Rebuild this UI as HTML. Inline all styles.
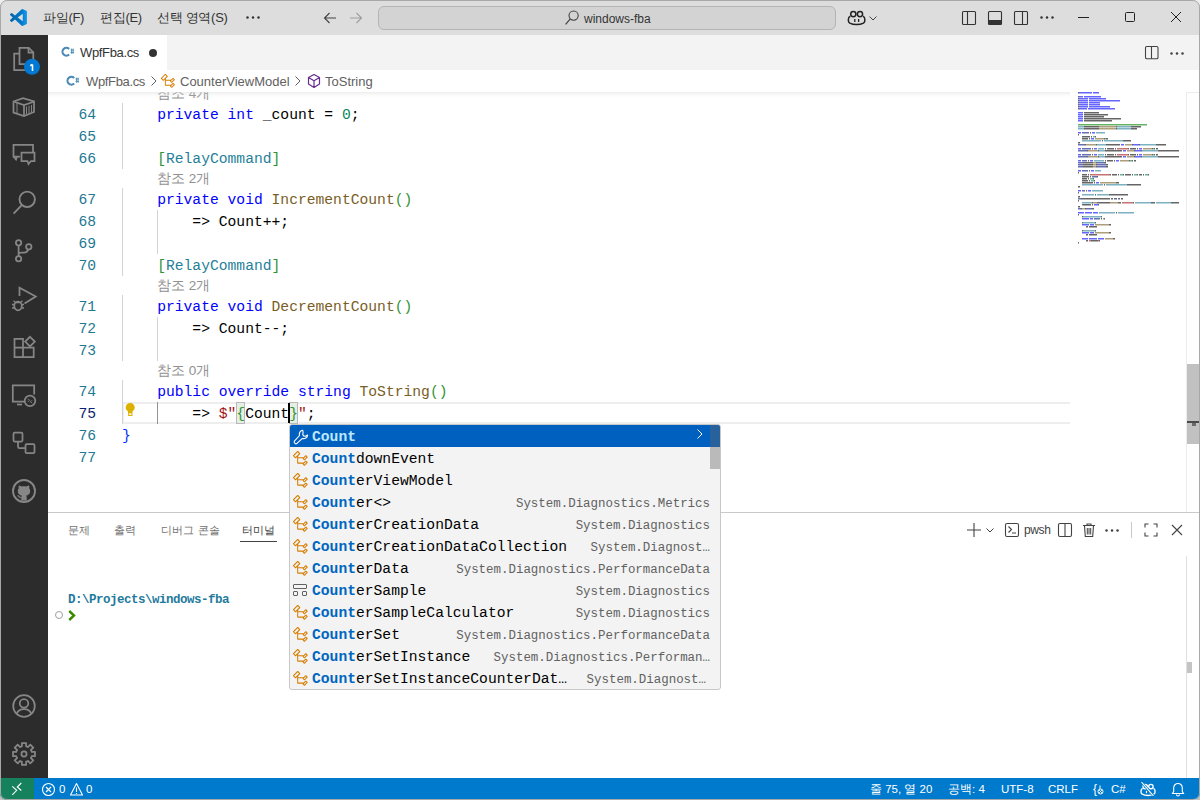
<!DOCTYPE html>
<html><head><meta charset="utf-8">
<style>
*{box-sizing:border-box;margin:0;padding:0}
html,body{width:1200px;height:800px;overflow:hidden;background:linear-gradient(#eeeeee 0,#eeeeee 400px,#c2c2c2 400px,#c2c2c2 800px)}
body{font-family:"Liberation Sans",sans-serif;position:relative}
.a{position:absolute}
svg{overflow:visible}
.win{position:absolute;left:0;top:0;width:1200px;height:800px;border-radius:7px;overflow:hidden;background:#fff}
.frame{position:absolute;left:0;top:0;width:1200px;height:800px;border:1px solid #a8a8a8;border-radius:7px;pointer-events:none}
.title{position:absolute;left:0;top:0;width:1200px;height:35px;background:#dddddd}
.menu{position:absolute;top:0;height:35px;line-height:35px;font-size:13px;color:#333;letter-spacing:-.3px}
.act{position:absolute;left:0;top:35px;width:48px;height:743px;background:#2c2c2c}
.tabs{position:absolute;left:48px;top:35px;width:1152px;height:35px;background:#f3f3f3}
.tab{position:absolute;left:0;top:0;width:119px;height:35px;background:#fff}
.bc{position:absolute;left:48px;top:70px;width:1152px;height:22px;background:#fff;font-size:13px;color:#616161;line-height:22px}
.ed{position:absolute;left:48px;top:92px;width:1152px;height:420px;background:#fff;overflow:hidden}
.mono{font-family:"Liberation Mono",monospace}
.ln{position:absolute;font-family:"Liberation Mono",monospace;left:0;width:50px;text-align:right;font-size:14.66px;color:#237893;height:22px;line-height:24px}
.cl{position:absolute;font-family:"Liberation Mono",monospace;height:22px;line-height:24px;font-size:14.66px;white-space:pre;color:#000}
.lens{position:absolute;font-size:13.5px;color:#919191;height:19px;line-height:19px;white-space:pre}
.k{color:#0000ff}.m{color:#795e26}.c{color:#267f99}.g{color:#319331}.s{color:#a31515}.n{color:#098658}.b1{color:#0431fa}
.panel{position:absolute;left:48px;top:512px;width:1152px;height:266px;background:#fff;border-top:1px solid #c9c9c9}
.status{position:absolute;left:0;top:778px;width:1200px;height:21px;background:#007acc;color:#fff;font-size:12px;line-height:21px}
.ptab{position:absolute;top:521px;font-size:11px;line-height:18px;color:#717171;letter-spacing:.2px}
.stx{position:absolute;top:778px;height:22px;line-height:22px;font-size:11.5px;color:#fff;white-space:pre}
.sug{position:absolute;z-index:10;left:289px;top:424px;width:432px;height:266px;background:#f3f3f3;border:1px solid #c8c8c8;border-radius:3px;overflow:hidden}
.row{position:absolute;font-family:"Liberation Mono",monospace;left:0;width:430px;height:22px;line-height:24px;font-size:14.66px;white-space:pre;color:#000}
.hl{color:#0066bf;font-weight:bold}
.det{position:absolute;right:10px;top:1px;font-size:12.45px;color:#616161}
</style></head><body>
<div class="win">
  <div class="title">
    <svg class="a" style="left:10px;top:9px" width="17" height="17" viewBox="0 0 100 100"><defs><linearGradient id="lg" x1="0" y1="0" x2="1" y2="0"><stop offset="0" stop-color="#0065a9"/><stop offset="0.7" stop-color="#007acc"/><stop offset="1" stop-color="#1f9cf0"/></linearGradient></defs><path fill="url(#lg)" d="M96.46 10.8L75.86.87a6.23 6.23 0 0 0-7.1 1.2L29.55 37.850 12.470 24.9a4.16 4.16 0 0 0-5.32.23l-5.5 5a4.17 4.17 0 0 0 0 6.16L16.45 50 1.65 63.7a4.17 4.17 0 0 0 0 6.160l5.5 5a4.16 4.16 0 0 0 5.32.23l17.08-12.96 39.21 35.78a6.22 6.22 0 0 0 7.1 1.2l20.6-9.92A6.25 6.25 0 0 0 100 83.56V16.44a6.25 6.25 0 0 0-3.54-5.64zM75.02 72.7L45.28 50l29.740-22.7v45.4z"/></svg>
    <div class="menu" style="left:43px">파일(F)</div>
    <div class="menu" style="left:100px">편집(E)</div>
    <div class="menu" style="left:157px">선택 영역(S)</div>
    <svg class="a" style="left:246px;top:16px" width="14" height="3"><circle cx="1.5" cy="1.5" r="1.25" fill="#333"/><circle cx="7" cy="1.5" r="1.25" fill="#333"/><circle cx="12.5" cy="1.5" r="1.25" fill="#333"/></svg>
    <svg class="a" style="left:322px;top:10px" width="16" height="16" viewBox="0 0 16 16"><path d="M14 8H2.5M7.5 3L2.5 8l5 5" stroke="#424242" stroke-width="1.1" fill="none"/></svg>
    <svg class="a" style="left:348px;top:10px" width="16" height="16" viewBox="0 0 16 16"><path d="M2 8h11.5M8.5 3l5 5-5 5" stroke="#9e9e9e" stroke-width="1.1" fill="none"/></svg>
    <div class="a" style="left:378px;top:6px;width:458px;height:24px;border:1px solid #b4b4b4;border-radius:6px;background:#d3d3d3"></div>
    <svg class="a" style="left:564px;top:10px" width="16" height="16" viewBox="0 0 16 16"><circle cx="9.6" cy="5.6" r="4.6" stroke="#424242" stroke-width="1.1" fill="none"/><path d="M6.3 8.9L1.6 14.4" stroke="#424242" stroke-width="1.2"/></svg>
    <div class="a" style="left:584px;top:7px;height:24px;line-height:24px;font-size:12px;color:#333">windows-fba</div>
    <svg class="a" style="left:846px;top:8px" width="20" height="18" viewBox="0 0 20 18"><circle cx="7.3" cy="6.1" r="2.6" fill="none" stroke="#222" stroke-width="1.5"/><circle cx="14" cy="6.1" r="2.6" fill="none" stroke="#222" stroke-width="1.5"/><path d="M4.300 8.200C3 8.700 2.400 9.800 2.400 11.200V12.800C2.400 13.800 3 14.600 3.800 15.100 5.600 16.100 8 16.600 10.600 16.600S15.600 16.100 17.400 15.100C18.200 14.600 18.800 13.800 18.800 12.800V11.200C18.800 9.800 18.200 8.700 17 8.200" fill="none" stroke="#222" stroke-width="1.5"/><path d="M8.800 11v3M12.600 11v3" stroke="#222" stroke-width="1.3"/></svg>
    <svg class="a" style="left:868px;top:14px" width="10" height="8" viewBox="0 0 10 8"><path d="M1.5 2.5l3.500 3.500 3.500-3.500" stroke="#424242" stroke-width="1" fill="none"/></svg>
    <svg class="a" style="left:961px;top:10px" width="16" height="16" viewBox="0 0 16 16"><rect x="1.5" y="1.5" width="13" height="13" rx="1" fill="none" stroke="#333" stroke-width="1.1"/><path d="M6.5 1.5v13" stroke="#333" stroke-width="1.1"/></svg>
    <svg class="a" style="left:987px;top:10px" width="16" height="16" viewBox="0 0 16 16"><rect x="1.5" y="1.5" width="13" height="13" rx="1" fill="none" stroke="#333" stroke-width="1.1"/><rect x="1.5" y="10" width="13" height="4.5" fill="#333"/></svg>
    <svg class="a" style="left:1013px;top:10px" width="16" height="16" viewBox="0 0 16 16"><rect x="1.5" y="1.5" width="13" height="13" rx="1" fill="none" stroke="#333" stroke-width="1.1"/><path d="M9.5 1.5v13" stroke="#333" stroke-width="1.1"/></svg>
    <svg class="a" style="left:1040px;top:16px" width="14" height="3"><circle cx="1.5" cy="1.5" r="1.25" fill="#333"/><circle cx="7" cy="1.5" r="1.25" fill="#333"/><circle cx="12.5" cy="1.5" r="1.25" fill="#333"/></svg>
    <div class="a" style="left:1078px;top:17px;width:11px;height:1px;background:#222"></div>
    <div class="a" style="left:1125px;top:12px;width:10px;height:10px;border:1px solid #222;border-radius:1.5px"></div>
    <svg class="a" style="left:1170px;top:11px" width="12" height="12" viewBox="0 0 12 12"><path d="M1 1l10 10M11 1L1 11" stroke="#222" stroke-width="1"/></svg>
  </div>
  <div class="act"></div>
  <svg class="a" style="left:12px;top:47px" width="24" height="24" viewBox="0 0 24 24"><path d="M7.2 6.5H2.2v16.5h12v-5" stroke="#868686" stroke-width="1.75" fill="none"/><path d="M7.5 0.75h9.2l4.6 4.6V17.2H7.5z" stroke="#868686" stroke-width="1.75" fill="none"/><path d="M16.5 0.75v4.75h4.75" stroke="#868686" stroke-width="1.75" fill="none"/><circle cx="20" cy="19.8" r="8" fill="#0078d4"/><path d="M20.500 24V17.400M18.200 18.800l2.300-1.400" stroke="#fff" stroke-width="1.6" fill="none"/></svg>
  <svg class="a" style="left:12px;top:95px" width="24" height="24" viewBox="0 0 24 24"><path d="M1.5 6.5L11 3.2l11 3.3v10.5L12 21 1.5 17.5z" stroke="#868686" stroke-width="1.75" fill="none"/><path d="M1.5 6.5L12 10l10.5-3.5M12 10v11" stroke="#868686" stroke-width="1.75" fill="none"/><path d="M5 8v10.5M14.5 11.5v7.5M17 10.8v7.5M19.5 10v7.5" stroke="#868686" stroke-width="1" fill="none"/></svg>
  <svg class="a" style="left:12px;top:143px" width="24" height="24" viewBox="0 0 24 24"><path d="M8 13.5H1.5V1.75H21V9" stroke="#868686" stroke-width="1.75" fill="none"/><path d="M1.5 13.5l2.5 3 1-3" stroke="#868686" stroke-width="1.75" fill="none"/><path d="M9.5 9.5h13v8.5h-3.5l-2.5 3-1-3h-6z" stroke="#868686" stroke-width="1.75" fill="none"/></svg>
  <svg class="a" style="left:12px;top:191px" width="24" height="24" viewBox="0 0 24 24"><circle cx="15.2" cy="8.3" r="7.7" stroke="#868686" stroke-width="1.9" fill="none"/><path d="M10 13.9L1.6 22.6" stroke="#868686" stroke-width="1.9" fill="none"/></svg>
  <svg class="a" style="left:12px;top:239px" width="24" height="24" viewBox="0 0 24 24"><circle cx="6.6" cy="3.8" r="2.7" stroke="#868686" stroke-width="1.75" fill="none"/><circle cx="16.8" cy="7.8" r="2.7" stroke="#868686" stroke-width="1.75" fill="none"/><circle cx="6.6" cy="19.8" r="2.7" stroke="#868686" stroke-width="1.75" fill="none"/><path d="M6.6 6.5v10.6M16.2 10.5c-.5 2-2 3-4 3H9.5c-2 0-2.900 1-2.900 2" stroke="#868686" stroke-width="1.75" fill="none"/></svg>
  <svg class="a" style="left:12px;top:287px" width="24" height="24" viewBox="0 0 24 24"><path d="M7.5 9V.8L23.8 9.5 12.5 16.5" stroke="#868686" stroke-width="1.75" fill="none"/><ellipse cx="6" cy="19" rx="3.8" ry="4.3" stroke="#868686" stroke-width="1.75" fill="none"/><path d="M2.2 17.5H0M2.2 21H0M9.8 17.5H12M9.8 21H12M3.5 15.5L1.5 13.8M8.5 15.5l2-1.7M2.200 15.500h7.6" stroke="#868686" stroke-width="1.3" fill="none"/></svg>
  <svg class="a" style="left:12px;top:335px" width="24" height="24" viewBox="0 0 24 24"><path d="M2.5 3.8h8.5v18.2H2.5zM2.5 12.7h19.2v9.3H11" stroke="#868686" stroke-width="1.75" fill="none"/><path d="M18 1.8l4.8 4.800-4.800 4.800-4.800-4.800z" stroke="#868686" stroke-width="1.75" fill="none"/></svg>
  <svg class="a" style="left:12px;top:383px" width="24" height="24" viewBox="0 0 24 24"><path d="M12 18.6H.8V2.4h21.4v9" stroke="#868686" stroke-width="1.75" fill="none"/><path d="M5 21.5h5" stroke="#868686" stroke-width="1.75" fill="none"/><circle cx="18" cy="17.8" r="5.3" stroke="#868686" stroke-width="1.75" fill="none"/><path d="M16 15.8l1.5 1.500-1.500 1.500M20 17.3l-1.5 1.5 1.500 1.500" stroke="#868686" stroke-width="1" fill="none"/></svg>
  <svg class="a" style="left:12px;top:431px" width="24" height="24" viewBox="0 0 24 24"><rect x="1.5" y="1.5" width="9" height="9" rx="1.2" stroke="#868686" stroke-width="1.75" fill="none"/><rect x="13.5" y="13.2" width="9" height="9" rx="1.2" stroke="#868686" stroke-width="1.75" fill="none"/><path d="M6 10.5v5.2c0 1 .5 1.500 1.500 1.500h6" stroke="#868686" stroke-width="1.75" fill="none"/></svg>
  <svg class="a" style="left:12px;top:479px" width="24" height="24" viewBox="0 0 24 24"><circle cx="12" cy="12" r="11" stroke="#868686" stroke-width="1.9" fill="none"/><path d="M9.3 21.5v-3.2c0-.9.3-1.500.7-1.800-2.300-.3-4.200-1.300-4.200-4.800 0-1 .3-1.800 1-2.500-.1-.3-.4-1.300.1-2.600 0 0 .8-.3 2.600 1 .8-.2 1.600-.3 2.500-.3s1.700.1 2.500.3c1.800-1.300 2.600-1 2.600-1 .5 1.300.2 2.300.1 2.600.6.7 1 1.500 1 2.500 0 3.500-2 4.500-4.200 4.800.4.300.7.900.7 1.800v3.200z" fill="#868686"/><path d="M5.500 16.600c1.200.100 1.700 1.300 2.500 1.800.6.300 1.300.300 1.300.300" stroke="#868686" stroke-width="1.2" fill="none"/></svg>
  <svg class="a" style="left:12px;top:694px" width="24" height="24" viewBox="0 0 24 24"><circle cx="12" cy="12" r="10.8" stroke="#868686" stroke-width="1.75" fill="none"/><circle cx="12" cy="9.3" r="4.3" stroke="#868686" stroke-width="1.75" fill="none"/><path d="M4.600 19.800c1.300-2.800 4-4.600 7.400-4.600s6.100 1.800 7.400 4.600" stroke="#868686" stroke-width="1.75" fill="none"/></svg>
  <svg class="a" style="left:12px;top:742px" width="24" height="24" viewBox="0 0 24 24"><path d="M8.94 4.61 L9.93 4.27 L9.86 1.01 L14.14 1.01 L14.07 4.27 L15.06 4.61 L16.00 5.07 L18.26 2.71 L21.29 5.74 L18.93 8.00 L19.39 8.94 L19.73 9.93 L22.99 9.86 L22.99 14.14 L19.73 14.07 L19.39 15.06 L18.93 16.00 L21.29 18.26 L18.26 21.29 L16.00 18.93 L15.06 19.39 L14.07 19.73 L14.14 22.99 L9.86 22.99 L9.93 19.73 L8.94 19.39 L8.00 18.93 L5.74 21.29 L2.71 18.26 L5.07 16.00 L4.61 15.06 L4.27 14.07 L1.01 14.14 L1.01 9.86 L4.27 9.93 L4.61 8.94 L5.07 8.00 L2.71 5.74 L5.74 2.71 L8.00 5.07Z" stroke="#868686" stroke-width="1.75" fill="none" stroke-linejoin="round"/><circle cx="12" cy="12" r="2.6" stroke="#868686" stroke-width="1.75" fill="none"/></svg>
  <div class="tabs"><div class="tab"></div></div>
  <svg class="a" style="left:60px;top:44px" width="16" height="16" viewBox="0 0 16 16"><path d="M9.16 5.04A3.9 3.9 0 1 0 9.16 10.56" stroke="#4a8ab4" stroke-width="2.1" fill="none"/><path d="M11.6 4.600v5.200M13.100 4.600v5.200M10.500 6h3.600M10.500 8.400h3.600" stroke="#4a8ab4" stroke-width=".9" fill="none"/></svg>
  <div class="a" style="left:80px;top:44px;font-size:13px;color:#333;line-height:18px;letter-spacing:-.35px">WpfFba.cs</div>
  <div class="a" style="left:149px;top:49px;width:8px;height:8px;border-radius:4px;background:#333"></div>
  <svg class="a" style="left:1144px;top:45px" width="16" height="16" viewBox="0 0 16 16"><rect x="1.5" y="1.5" width="12.5" height="12.3" rx="1.3" fill="none" stroke="#424242" stroke-width="1.1"/><path d="M7.5 1.5v12.3" stroke="#424242" stroke-width="1.1"/></svg>
  <svg class="a" style="left:1170px;top:52px" width="14" height="3"><circle cx="1.5" cy="1.5" r="1.25" fill="#424242"/><circle cx="7" cy="1.5" r="1.25" fill="#424242"/><circle cx="12.5" cy="1.5" r="1.25" fill="#424242"/></svg>
  <div class="bc"></div>
  <svg class="a" style="left:65px;top:73px" width="16" height="16" viewBox="0 0 16 16"><path d="M9.16 5.04A3.9 3.9 0 1 0 9.16 10.56" stroke="#4a8ab4" stroke-width="2.1" fill="none"/><path d="M11.6 4.600v5.200M13.100 4.600v5.200M10.500 6h3.600M10.500 8.400h3.600" stroke="#4a8ab4" stroke-width=".9" fill="none"/></svg>
  <div class="a" style="left:86px;top:73px;font-size:13px;color:#616161;line-height:18px;letter-spacing:-.35px">WpfFba.cs</div>
  <svg class="a" style="left:149px;top:74px" width="10" height="14" viewBox="0 0 10 14"><path d="M2.5 2.5l4.5 4.5-4.5 4.5" stroke="#616161" stroke-width="1" fill="none"/></svg>
  <svg class="a" style="left:160px;top:73px" width="16" height="16" viewBox="0 0 16 16"><path fill="#d67e00" d="M11.34 9.71h.71l2.67-2.67v-.71L13.38 5h-.7l-1.82 1.81h-5V5.56l1.86-1.86V3l-2-2H5L1 5v.71l2 2h.71l1.14-1.15v5.79l.5.5H10v.52l1.33 1.34h.71l2.67-2.67v-.71L13.37 10h-.7l-1.86 1.85h-5v-4H10v.48l1.34 1.38zm1.69-3.65l.63.63-2 2-.63-.63 2-2zm0 5l.63.63-2 2-.63-.63 2-2zM3.35 6.650L2.060 5.360 5.350 2.060l1.290 1.290-3.290 3.300z"/></svg>
  <div class="a" style="left:180px;top:73px;font-size:13px;color:#616161;line-height:18px">CounterViewModel</div>
  <svg class="a" style="left:293px;top:74px" width="10" height="14" viewBox="0 0 10 14"><path d="M2.5 2.5l4.5 4.5-4.5 4.5" stroke="#616161" stroke-width="1" fill="none"/></svg>
  <svg class="a" style="left:306px;top:73px" width="16" height="16" viewBox="0 0 16 16"><path d="M8 1.5l5.5 3v6.500L8 14.5 2.500 11V4.500zM2.500 4.500L8 7.700l5.500-3.200M8 7.700v6.800" stroke="#652d90" stroke-width="1.2" fill="none" stroke-linejoin="round"/></svg>
  <div class="a" style="left:325px;top:73px;font-size:13px;color:#616161;line-height:18px">ToString</div>
  <div class="ed"><div class="a" style="left:-48px;top:-92px;width:1200px;height:800px">
<div class="lens" style="left:157px;top:84px">참조 4개</div>
<div class="ln" style="left:40px;top:103px;width:56px;">64</div>
<div class="cl" style="left:122px;top:103px">    <span class="k">private</span> <span class="k">int</span> _count = <span class="n">0</span>;</div>
<div class="ln" style="left:40px;top:125px;width:56px;">65</div>
<div class="ln" style="left:40px;top:147px;width:56px;">66</div>
<div class="cl" style="left:122px;top:147px">    <span class="g">[</span><span class="c">RelayCommand</span><span class="g">]</span></div>
<div class="lens" style="left:157px;top:169px">참조 2개</div>
<div class="ln" style="left:40px;top:188px;width:56px;">67</div>
<div class="cl" style="left:122px;top:188px">    <span class="k">private</span> <span class="k">void</span> <span class="m">IncrementCount</span><span class="g">()</span></div>
<div class="ln" style="left:40px;top:210px;width:56px;">68</div>
<div class="cl" style="left:122px;top:210px">        =&gt; Count++;</div>
<div class="ln" style="left:40px;top:232px;width:56px;">69</div>
<div class="ln" style="left:40px;top:254px;width:56px;">70</div>
<div class="cl" style="left:122px;top:254px">    <span class="g">[</span><span class="c">RelayCommand</span><span class="g">]</span></div>
<div class="lens" style="left:157px;top:276px">참조 2개</div>
<div class="ln" style="left:40px;top:295px;width:56px;">71</div>
<div class="cl" style="left:122px;top:295px">    <span class="k">private</span> <span class="k">void</span> <span class="m">DecrementCount</span><span class="g">()</span></div>
<div class="ln" style="left:40px;top:317px;width:56px;">72</div>
<div class="cl" style="left:122px;top:317px">        =&gt; Count--;</div>
<div class="ln" style="left:40px;top:339px;width:56px;">73</div>
<div class="lens" style="left:157px;top:361px">참조 0개</div>
<div class="ln" style="left:40px;top:380px;width:56px;">74</div>
<div class="cl" style="left:122px;top:380px">    <span class="k">public</span> <span class="k">override</span> <span class="k">string</span> <span class="m">ToString</span><span class="g">()</span></div>
<div class="a" style="left:122px;top:402px;width:948px;height:22px;border:2px solid #eeeeee;border-right:none"></div>
<div class="a" style="left:236px;top:402px;width:9px;height:22px;background:#e5eee5;border:1px solid #b9b9b9"></div>
<div class="a" style="left:289px;top:402px;width:9px;height:22px;background:#e5eee5;border:1px solid #b9b9b9"></div>
<div class="ln" style="left:40px;top:402px;width:56px;color:#0b216f;">75</div>
<div class="cl" style="left:122px;top:402px">        =&gt; <span class="s">$"</span><span class="g">{</span>Count<span class="g">}</span><span class="s">"</span>;</div>
<div class="a" style="left:288px;top:403px;width:2px;height:20px;background:#000"></div>
<div class="ln" style="left:40px;top:424px;width:56px;">76</div>
<div class="cl" style="left:122px;top:424px"><span class="b1">}</span></div>
<div class="ln" style="left:40px;top:446px;width:56px;">77</div>
<div class="a" style="left:122px;top:103px;width:1px;height:66px;background:#d3d3d3"></div>
<div class="a" style="left:122px;top:188px;width:1px;height:88px;background:#d3d3d3"></div>
<div class="a" style="left:122px;top:295px;width:1px;height:66px;background:#d3d3d3"></div>
<div class="a" style="left:122px;top:380px;width:1px;height:44px;background:#d3d3d3"></div>
<div class="a" style="left:157px;top:210px;width:1px;height:44px;background:#d3d3d3"></div>
<div class="a" style="left:157px;top:317px;width:1px;height:44px;background:#d3d3d3"></div>
<div class="a" style="left:157px;top:402px;width:1px;height:22px;background:#939393"></div>
<svg class="a" style="left:124px;top:402px" width="13" height="15" viewBox="0 0 13 15"><path d="M6.200 1C3.700 1 1.700 2.900 1.700 5.400c0 1.500.7 2.600 1.700 3.400.5.400.7.900.7 1.400V11h4.200v-.8c0-.5.2-1 .7-1.400 1-.8 1.700-1.900 1.700-3.400C10.700 2.900 8.700 1 6.200 1z" fill="#ddb100"/><path d="M4.700 10.800h3.200v2.700H4.700z" fill="none" stroke="#ddb100" stroke-width="1.1"/></svg>
<svg class="a" style="left:1078px;top:92.2px;opacity:.6" width="110" height="160" viewBox="0 0 110 160"><path fill="#000000" d="M0 0h1v1.5h-1zM0 4h1v1.5h-1zM0 6h1v1.5h-1zM0 8h1v1.5h-1zM0 10h1v1.5h-1zM0 12h1v1.5h-1zM0 14h1v1.5h-1zM0 16h1v1.5h-1zM6 20h6v1.5h-6zM12 20h1v1.5h-1zM13 20h7v1.5h-7zM20 20h1v1.5h-1zM6 22h6v1.5h-6zM12 22h1v1.5h-1zM13 22h7v1.5h-7zM20 22h1v1.5h-1zM21 22h8v1.5h-8zM29 22h1v1.5h-1zM6 24h6v1.5h-6zM12 24h1v1.5h-1zM13 24h7v1.5h-7zM20 24h1v1.5h-1zM21 24h4v1.5h-4zM25 24h1v1.5h-1zM6 26h16v1.5h-16zM22 26h1v1.5h-1zM23 26h4v1.5h-4zM27 26h1v1.5h-1zM28 26h14v1.5h-14zM42 26h1v1.5h-1zM6 28h16v1.5h-16zM22 28h1v1.5h-1zM23 28h4v1.5h-4zM27 28h1v1.5h-1zM28 28h5v1.5h-5zM33 28h1v1.5h-1zM6 34h1v1.5h-1zM7 34h13v1.5h-13zM20 34h1v1.5h-1zM38 34h1v1.5h-1zM53 34h1v1.5h-1zM54 34h7v1.5h-7zM61 34h1v1.5h-1zM62 34h1v1.5h-1zM6 36h1v1.5h-1zM7 36h13v1.5h-13zM20 36h1v1.5h-1zM38 36h1v1.5h-1zM53 36h1v1.5h-1zM54 36h3v1.5h-3zM57 36h1v1.5h-1zM58 36h1v1.5h-1zM12 40h1v1.5h-1zM0 42h1v1.5h-1zM4 44h8v1.5h-8zM13 44h1v1.5h-1zM17 44h1v1.5h-1zM4 46h6v1.5h-6zM11 46h1v1.5h-1zM26 46h1v1.5h-1zM28 46h1v1.5h-1zM29 46h1v1.5h-1zM24 48h1v1.5h-1zM45 48h1v1.5h-1zM46 48h6v1.5h-6zM52 48h1v1.5h-1zM0 50h1v1.5h-1zM1 50h1v1.5h-1zM7 52h1v1.5h-1zM18 52h1v1.5h-1zM28 52h1v1.5h-1zM29 52h12v1.5h-12zM41 52h1v1.5h-1zM54 52h1v1.5h-1zM61 52h1v1.5h-1zM78 52h1v1.5h-1zM79 52h5v1.5h-5zM84 52h1v1.5h-1zM85 52h1v1.5h-1zM86 52h1v1.5h-1zM87 52h1v1.5h-1zM14 56h1v1.5h-1zM27 56h1v1.5h-1zM29 56h7v1.5h-7zM37 56h1v1.5h-1zM50 56h1v1.5h-1zM52 56h6v1.5h-6zM59 56h1v1.5h-1zM74 56h1v1.5h-1zM76 56h1v1.5h-1zM78 56h1v1.5h-1zM79 56h1v1.5h-1zM9 58h1v1.5h-1zM20 58h1v1.5h-1zM27 58h1v1.5h-1zM28 58h15v1.5h-15zM43 58h1v1.5h-1zM56 58h1v1.5h-1zM63 58h1v1.5h-1zM80 58h1v1.5h-1zM81 58h16v1.5h-16zM97 58h1v1.5h-1zM98 58h1v1.5h-1zM99 58h1v1.5h-1zM100 58h1v1.5h-1zM14 62h1v1.5h-1zM27 62h1v1.5h-1zM29 62h7v1.5h-7zM37 62h1v1.5h-1zM50 62h1v1.5h-1zM52 62h6v1.5h-6zM59 62h1v1.5h-1zM74 62h1v1.5h-1zM76 62h1v1.5h-1zM78 62h1v1.5h-1zM79 62h1v1.5h-1zM9 64h1v1.5h-1zM20 64h1v1.5h-1zM27 64h1v1.5h-1zM28 64h15v1.5h-15zM43 64h1v1.5h-1zM56 64h1v1.5h-1zM63 64h1v1.5h-1zM80 64h1v1.5h-1zM81 64h16v1.5h-16zM97 64h1v1.5h-1zM98 64h1v1.5h-1zM99 64h1v1.5h-1zM100 64h1v1.5h-1zM10 68h1v1.5h-1zM27 68h1v1.5h-1zM29 68h6v1.5h-6zM36 68h1v1.5h-1zM51 68h1v1.5h-1zM54 68h1v1.5h-1zM56 68h1v1.5h-1zM57 68h1v1.5h-1zM5 70h1v1.5h-1zM6 70h8v1.5h-8zM14 70h1v1.5h-1zM18 70h1v1.5h-1zM26 70h1v1.5h-1zM27 70h1v1.5h-1zM5 72h1v1.5h-1zM6 72h8v1.5h-8zM14 72h1v1.5h-1zM18 72h1v1.5h-1zM28 72h1v1.5h-1zM29 72h1v1.5h-1zM5 74h1v1.5h-1zM6 74h8v1.5h-8zM14 74h1v1.5h-1zM18 74h1v1.5h-1zM28 74h1v1.5h-1zM29 74h1v1.5h-1zM11 78h1v1.5h-1zM0 80h1v1.5h-1zM4 82h5v1.5h-5zM10 82h1v1.5h-1zM32 82h1v1.5h-1zM34 82h5v1.5h-5zM40 82h1v1.5h-1zM45 82h1v1.5h-1zM47 82h6v1.5h-6zM54 82h1v1.5h-1zM59 82h1v1.5h-1zM61 82h3v1.5h-3zM65 82h1v1.5h-1zM70 82h1v1.5h-1zM4 84h7v1.5h-7zM12 84h1v1.5h-1zM19 84h1v1.5h-1zM4 86h5v1.5h-5zM10 86h1v1.5h-1zM15 86h1v1.5h-1zM4 88h6v1.5h-6zM11 88h1v1.5h-1zM16 88h1v1.5h-1zM4 90h11v1.5h-11zM16 90h1v1.5h-1zM38 90h1v1.5h-1zM39 90h1v1.5h-1zM40 90h1v1.5h-1zM26 92h1v1.5h-1zM49 92h1v1.5h-1zM50 92h12v1.5h-12zM62 92h1v1.5h-1zM0 94h1v1.5h-1zM1 94h1v1.5h-1zM8 98h1v1.5h-1zM0 100h1v1.5h-1zM17 102h1v1.5h-1zM31 102h1v1.5h-1zM32 102h17v1.5h-17zM49 102h1v1.5h-1zM0 104h1v1.5h-1zM1 104h1v1.5h-1zM3 106h1v1.5h-1zM4 106h28v1.5h-28zM33 106h1v1.5h-1zM34 106h1v1.5h-1zM36 106h1v1.5h-1zM38 106h1v1.5h-1zM41 106h1v1.5h-1zM43 106h1v1.5h-1zM44 106h1v1.5h-1zM0 108h1v1.5h-1zM14 110h1v1.5h-1zM19 110h1v1.5h-1zM21 110h1v1.5h-1zM22 110h9v1.5h-9zM31 110h1v1.5h-1zM40 110h1v1.5h-1zM41 110h1v1.5h-1zM42 110h1v1.5h-1zM55 110h1v1.5h-1zM73 110h1v1.5h-1zM74 110h2v1.5h-2zM76 110h1v1.5h-1zM93 110h1v1.5h-1zM94 110h5v1.5h-5zM99 110h1v1.5h-1zM100 110h1v1.5h-1zM5 112h1v1.5h-1zM6 112h7v1.5h-7zM14 112h1v1.5h-1zM20 112h1v1.5h-1zM0 114h1v1.5h-1zM1 114h1v1.5h-1zM3 116h1v1.5h-1zM7 116h1v1.5h-1zM14 116h1v1.5h-1zM15 116h1v1.5h-1zM38 120h1v1.5h-1zM0 122h1v1.5h-1zM4 124h1v1.5h-1zM23 124h1v1.5h-1zM23 126h1v1.5h-1zM26 126h1v1.5h-1zM4 130h1v1.5h-1zM17 130h1v1.5h-1zM31 132h1v1.5h-1zM32 132h1v1.5h-1zM8 134h1v1.5h-1zM9 134h1v1.5h-1zM11 134h5v1.5h-5zM16 134h1v1.5h-1zM17 134h1v1.5h-1zM18 134h1v1.5h-1zM4 138h1v1.5h-1zM17 138h1v1.5h-1zM31 140h1v1.5h-1zM32 140h1v1.5h-1zM8 142h1v1.5h-1zM9 142h1v1.5h-1zM11 142h5v1.5h-5zM16 142h1v1.5h-1zM17 142h1v1.5h-1zM18 142h1v1.5h-1zM35 146h1v1.5h-1zM36 146h1v1.5h-1zM8 148h1v1.5h-1zM9 148h1v1.5h-1zM13 148h1v1.5h-1zM14 148h5v1.5h-5zM19 148h1v1.5h-1zM21 148h1v1.5h-1zM0 150h1v1.5h-1z"/><path fill="#0000ff" d="M1 0h13v1.5h-13zM15 0h6v1.5h-6zM1 4h4v1.5h-4zM6 4h17v1.5h-17zM1 6h9v1.5h-9zM11 6h17v1.5h-17zM1 8h9v1.5h-9zM11 8h31v1.5h-31zM1 10h9v1.5h-9zM11 10h11v1.5h-11zM1 12h9v1.5h-9zM11 12h11v1.5h-11zM1 14h9v1.5h-9zM11 14h21v1.5h-21zM1 16h8v1.5h-8zM10 16h27v1.5h-27zM0 20h5v1.5h-5zM0 22h5v1.5h-5zM0 24h5v1.5h-5zM0 26h5v1.5h-5zM0 28h5v1.5h-5zM0 40h3v1.5h-3zM14 40h3v1.5h-3zM13 46h3v1.5h-3zM43 52h3v1.5h-3zM55 52h6v1.5h-6zM0 56h3v1.5h-3zM16 56h3v1.5h-3zM61 56h3v1.5h-3zM45 58h3v1.5h-3zM57 58h6v1.5h-6zM0 62h3v1.5h-3zM16 62h3v1.5h-3zM61 62h3v1.5h-3zM45 64h3v1.5h-3zM57 64h6v1.5h-6zM0 68h3v1.5h-3zM12 68h3v1.5h-3zM38 68h3v1.5h-3zM0 78h3v1.5h-3zM13 78h3v1.5h-3zM18 90h3v1.5h-3zM0 98h3v1.5h-3zM10 98h3v1.5h-3zM16 112h4v1.5h-4zM0 120h6v1.5h-6zM7 120h7v1.5h-7zM15 120h5v1.5h-5zM4 126h7v1.5h-7zM12 126h3v1.5h-3zM4 132h7v1.5h-7zM12 132h4v1.5h-4zM4 140h7v1.5h-7zM12 140h4v1.5h-4zM4 146h6v1.5h-6zM11 146h8v1.5h-8zM20 146h6v1.5h-6z"/><path fill="#008000" d="M0 32h69v1.5h-69z"/><path fill="#267f99" d="M0 34h6v1.5h-6zM39 34h14v1.5h-14zM0 36h6v1.5h-6zM39 36h14v1.5h-14zM18 40h9v1.5h-9zM4 48h19v1.5h-19zM26 48h19v1.5h-19zM19 52h9v1.5h-9zM62 52h16v1.5h-16zM20 56h6v1.5h-6zM21 58h6v1.5h-6zM64 58h16v1.5h-16zM20 62h6v1.5h-6zM21 64h6v1.5h-6zM64 64h16v1.5h-16zM16 68h10v1.5h-10zM17 78h6v1.5h-6zM4 92h21v1.5h-21zM28 92h21v1.5h-21zM14 98h11v1.5h-11zM4 102h12v1.5h-12zM19 102h12v1.5h-12zM4 110h10v1.5h-10zM57 110h16v1.5h-16zM78 110h15v1.5h-15zM21 120h16v1.5h-16zM40 120h16v1.5h-16zM5 124h18v1.5h-18zM5 130h12v1.5h-12zM5 138h12v1.5h-12z"/><path fill="#795e26" d="M21 34h17v1.5h-17zM21 36h17v1.5h-17zM17 46h9v1.5h-9zM8 52h10v1.5h-10zM47 52h7v1.5h-7zM65 56h9v1.5h-9zM10 58h10v1.5h-10zM49 58h7v1.5h-7zM65 62h9v1.5h-9zM10 64h10v1.5h-10zM49 64h7v1.5h-7zM42 68h9v1.5h-9zM15 70h3v1.5h-3zM15 72h3v1.5h-3zM15 74h3v1.5h-3zM22 90h16v1.5h-16zM15 110h4v1.5h-4zM32 110h8v1.5h-8zM4 116h3v1.5h-3zM17 132h14v1.5h-14zM17 140h14v1.5h-14zM27 146h8v1.5h-8z"/><path fill="#001080" d="M4 40h7v1.5h-7zM0 52h7v1.5h-7zM4 56h9v1.5h-9zM0 58h9v1.5h-9zM4 62h9v1.5h-9zM0 64h9v1.5h-9zM4 68h5v1.5h-5zM0 70h5v1.5h-5zM19 70h7v1.5h-7zM0 72h5v1.5h-5zM19 72h9v1.5h-9zM0 74h5v1.5h-5zM19 74h9v1.5h-9zM4 78h6v1.5h-6zM14 84h5v1.5h-5zM4 98h3v1.5h-3zM0 106h3v1.5h-3zM37 106h1v1.5h-1zM40 106h1v1.5h-1zM20 110h1v1.5h-1zM4 112h1v1.5h-1zM0 116h3v1.5h-3zM8 116h6v1.5h-6zM16 126h6v1.5h-6z"/><path fill="#098658" d="M15 44h2v1.5h-2zM27 46h1v1.5h-1zM75 56h1v1.5h-1zM75 62h1v1.5h-1zM52 68h2v1.5h-2zM42 82h3v1.5h-3zM56 82h3v1.5h-3zM67 82h3v1.5h-3zM12 86h3v1.5h-3zM13 88h3v1.5h-3zM25 126h1v1.5h-1z"/><path fill="#a31515" d="M39 56h11v1.5h-11zM39 62h11v1.5h-11zM12 82h20v1.5h-20zM44 110h11v1.5h-11zM11 148h2v1.5h-2zM20 148h1v1.5h-1z"/></svg>
<div class="a" style="left:1186px;top:92px;width:14px;height:420px;border-left:1px solid #ececec;border-top:1px solid #ececec"></div>
<div class="a" style="left:1187px;top:364px;width:13px;height:80px;background:rgba(100,100,100,.4)"></div>
<div class="a" style="left:1187px;top:421px;width:13px;height:2px;background:#4a4a4a"></div>
<div class="a" style="left:1192px;top:423px;width:4px;height:3px;background:#6a6a6a"></div>
</div><div class="a" style="left:0;top:0;width:1022px;height:6px;box-shadow:#dddddd 0 6px 6px -6px inset"></div></div>
  <div class="sug">
<div class="a" style="left:0;top:0;width:430px;height:22px;background:#0060c0"></div>
<div class="row" style="top:0;color:#fff"><svg class="a" style="left:3px;top:4px" width="16" height="16" viewBox="0 0 16 16"><path d="M9.8 1.3a3.900 3.900 0 0 0-3.300 5.200L1.600 11.900a1.700 1.700 0 0 0 2.400 2.400l5.400-4.900a3.900 3.900 0 0 0 5.200-3.300l-2.300 1.100-1.700-.3-.9-1.500.4-1.600z" fill="none" stroke="#fff" stroke-width="1.1" stroke-linejoin="round"/></svg><span style="position:absolute;left:22px;top:0"><b style="color:#bbe7ff">Count</b></span></div>
<svg class="a" style="left:405px;top:2px" width="10" height="14" viewBox="0 0 10 14"><path d="M2.5 2.5l4.500 4.500-4.500 4.500" stroke="#fff" stroke-width="1" fill="none"/></svg>
<div class="row" style="top:22px"><svg class="a" style="left:2px;top:2.5px" width="17" height="17" viewBox="0 0 16 16"><path fill="#d67e00" d="M11.34 9.71h.71l2.67-2.67v-.71L13.38 5h-.7l-1.82 1.81h-5V5.56l1.86-1.86V3l-2-2H5L1 5v.71l2 2h.71l1.14-1.15v5.79l.5.5H10v.52l1.33 1.34h.71l2.67-2.67v-.71L13.37 10h-.7l-1.86 1.85h-5v-4H10v.48l1.34 1.38zm1.69-3.65l.63.63-2 2-.63-.63 2-2zm0 5l.63.63-2 2-.63-.63 2-2zM3.35 6.650L2.060 5.360 5.350 2.060l1.290 1.290-3.290 3.300z"/></svg><span style="position:absolute;left:22px;top:0"><b class="hl">Count</b>downEvent</span></div>
<div class="row" style="top:44px"><svg class="a" style="left:2px;top:2.5px" width="17" height="17" viewBox="0 0 16 16"><path fill="#d67e00" d="M11.34 9.71h.71l2.67-2.67v-.71L13.38 5h-.7l-1.82 1.81h-5V5.56l1.86-1.86V3l-2-2H5L1 5v.71l2 2h.71l1.14-1.15v5.79l.5.5H10v.52l1.33 1.34h.71l2.67-2.67v-.71L13.37 10h-.7l-1.86 1.85h-5v-4H10v.48l1.34 1.38zm1.69-3.65l.63.63-2 2-.63-.63 2-2zm0 5l.63.63-2 2-.63-.63 2-2zM3.35 6.650L2.060 5.360 5.350 2.060l1.290 1.290-3.290 3.300z"/></svg><span style="position:absolute;left:22px;top:0"><b class="hl">Count</b>erViewModel</span></div>
<div class="row" style="top:66px"><svg class="a" style="left:2px;top:2.5px" width="17" height="17" viewBox="0 0 16 16"><path fill="#d67e00" d="M11.34 9.71h.71l2.67-2.67v-.71L13.38 5h-.7l-1.82 1.81h-5V5.56l1.86-1.86V3l-2-2H5L1 5v.71l2 2h.71l1.14-1.15v5.79l.5.5H10v.52l1.33 1.34h.71l2.67-2.67v-.71L13.37 10h-.7l-1.86 1.85h-5v-4H10v.48l1.34 1.38zm1.69-3.65l.63.63-2 2-.63-.63 2-2zm0 5l.63.63-2 2-.63-.63 2-2zM3.35 6.650L2.060 5.360 5.350 2.060l1.290 1.290-3.290 3.300z"/></svg><span style="position:absolute;left:22px;top:0"><b class="hl">Count</b>er&lt;&gt;</span><span class="det">System.Diagnostics.Metrics</span></div>
<div class="row" style="top:88px"><svg class="a" style="left:2px;top:2.5px" width="17" height="17" viewBox="0 0 16 16"><path fill="#d67e00" d="M11.34 9.71h.71l2.67-2.67v-.71L13.38 5h-.7l-1.82 1.81h-5V5.56l1.86-1.86V3l-2-2H5L1 5v.71l2 2h.71l1.14-1.15v5.79l.5.5H10v.52l1.33 1.34h.71l2.67-2.67v-.71L13.37 10h-.7l-1.86 1.85h-5v-4H10v.48l1.34 1.38zm1.69-3.65l.63.63-2 2-.63-.63 2-2zm0 5l.63.63-2 2-.63-.63 2-2zM3.35 6.650L2.060 5.360 5.350 2.060l1.290 1.290-3.290 3.300z"/></svg><span style="position:absolute;left:22px;top:0"><b class="hl">Count</b>erCreationData</span><span class="det">System.Diagnostics</span></div>
<div class="row" style="top:110px"><svg class="a" style="left:2px;top:2.5px" width="17" height="17" viewBox="0 0 16 16"><path fill="#d67e00" d="M11.34 9.71h.71l2.67-2.67v-.71L13.38 5h-.7l-1.82 1.81h-5V5.56l1.86-1.86V3l-2-2H5L1 5v.71l2 2h.71l1.14-1.15v5.79l.5.5H10v.52l1.33 1.34h.71l2.67-2.67v-.71L13.37 10h-.7l-1.86 1.85h-5v-4H10v.48l1.34 1.38zm1.69-3.65l.63.63-2 2-.63-.63 2-2zm0 5l.63.63-2 2-.63-.63 2-2zM3.35 6.650L2.060 5.360 5.350 2.060l1.290 1.290-3.290 3.300z"/></svg><span style="position:absolute;left:22px;top:0"><b class="hl">Count</b>erCreationDataCollection</span><span class="det">System.Diagnost…</span></div>
<div class="row" style="top:132px"><svg class="a" style="left:2px;top:2.5px" width="17" height="17" viewBox="0 0 16 16"><path fill="#d67e00" d="M11.34 9.71h.71l2.67-2.67v-.71L13.38 5h-.7l-1.82 1.81h-5V5.56l1.86-1.86V3l-2-2H5L1 5v.71l2 2h.71l1.14-1.15v5.79l.5.5H10v.52l1.33 1.34h.71l2.67-2.67v-.71L13.37 10h-.7l-1.86 1.85h-5v-4H10v.48l1.34 1.38zm1.69-3.65l.63.63-2 2-.63-.63 2-2zm0 5l.63.63-2 2-.63-.63 2-2zM3.35 6.650L2.060 5.360 5.350 2.060l1.290 1.290-3.290 3.300z"/></svg><span style="position:absolute;left:22px;top:0"><b class="hl">Count</b>erData</span><span class="det">System.Diagnostics.PerformanceData</span></div>
<div class="row" style="top:154px"><svg class="a" style="left:2px;top:3px" width="16" height="16" viewBox="0 0 16 16"><path fill="#616161" d="M2 2L1 3v3l1 1h12l1-1V3l-1-1H2zm0 1h12v3H2V3zm-1 7l1-1h3l1 1v3l-1 1H2l-1-1v-3zm2 0H2v3h3v-3H3zm7 0l1-1h3l1 1v3l-1 1h-3l-1-1v-3zm1 0v3h3v-3h-3z"/></svg><span style="position:absolute;left:22px;top:0"><b class="hl">Count</b>erSample</span><span class="det">System.Diagnostics</span></div>
<div class="row" style="top:176px"><svg class="a" style="left:2px;top:2.5px" width="17" height="17" viewBox="0 0 16 16"><path fill="#d67e00" d="M11.34 9.71h.71l2.67-2.67v-.71L13.38 5h-.7l-1.82 1.81h-5V5.56l1.86-1.86V3l-2-2H5L1 5v.71l2 2h.71l1.14-1.15v5.79l.5.5H10v.52l1.33 1.34h.71l2.67-2.67v-.71L13.37 10h-.7l-1.86 1.85h-5v-4H10v.48l1.34 1.38zm1.69-3.65l.63.63-2 2-.63-.63 2-2zm0 5l.63.63-2 2-.63-.63 2-2zM3.35 6.650L2.060 5.360 5.350 2.060l1.290 1.290-3.290 3.300z"/></svg><span style="position:absolute;left:22px;top:0"><b class="hl">Count</b>erSampleCalculator</span><span class="det">System.Diagnostics</span></div>
<div class="row" style="top:198px"><svg class="a" style="left:2px;top:2.5px" width="17" height="17" viewBox="0 0 16 16"><path fill="#d67e00" d="M11.34 9.71h.71l2.67-2.67v-.71L13.38 5h-.7l-1.82 1.81h-5V5.56l1.86-1.86V3l-2-2H5L1 5v.71l2 2h.71l1.14-1.15v5.79l.5.5H10v.52l1.33 1.34h.71l2.67-2.67v-.71L13.37 10h-.7l-1.86 1.85h-5v-4H10v.48l1.34 1.38zm1.69-3.65l.63.63-2 2-.63-.63 2-2zm0 5l.63.63-2 2-.63-.63 2-2zM3.35 6.650L2.060 5.360 5.350 2.060l1.290 1.290-3.290 3.300z"/></svg><span style="position:absolute;left:22px;top:0"><b class="hl">Count</b>erSet</span><span class="det">System.Diagnostics.PerformanceData</span></div>
<div class="row" style="top:220px"><svg class="a" style="left:2px;top:2.5px" width="17" height="17" viewBox="0 0 16 16"><path fill="#d67e00" d="M11.34 9.71h.71l2.67-2.67v-.71L13.38 5h-.7l-1.82 1.81h-5V5.56l1.86-1.86V3l-2-2H5L1 5v.71l2 2h.71l1.14-1.15v5.79l.5.5H10v.52l1.33 1.34h.71l2.67-2.67v-.71L13.37 10h-.7l-1.86 1.85h-5v-4H10v.48l1.34 1.38zm1.69-3.65l.63.63-2 2-.63-.63 2-2zm0 5l.63.63-2 2-.63-.63 2-2zM3.35 6.650L2.060 5.360 5.350 2.060l1.290 1.290-3.290 3.300z"/></svg><span style="position:absolute;left:22px;top:0"><b class="hl">Count</b>erSetInstance</span><span class="det">System.Diagnostics.Performan…</span></div>
<div class="row" style="top:242px"><svg class="a" style="left:2px;top:2.5px" width="17" height="17" viewBox="0 0 16 16"><path fill="#d67e00" d="M11.34 9.71h.71l2.67-2.67v-.71L13.38 5h-.7l-1.82 1.81h-5V5.56l1.86-1.86V3l-2-2H5L1 5v.71l2 2h.71l1.14-1.15v5.79l.5.5H10v.52l1.33 1.34h.71l2.67-2.67v-.71L13.37 10h-.7l-1.86 1.85h-5v-4H10v.48l1.34 1.38zm1.69-3.65l.63.63-2 2-.63-.63 2-2zm0 5l.63.63-2 2-.63-.63 2-2zM3.35 6.650L2.060 5.360 5.350 2.060l1.290 1.290-3.290 3.300z"/></svg><span style="position:absolute;left:22px;top:0"><b class="hl">Count</b>erSetInstanceCounterDat…</span><span class="det" style="right:14px">System.Diagnost…</span></div>
<div class="a" style="left:420px;top:0;width:10px;height:44px;background:rgba(100,100,100,.4)"></div>
</div>
  <div class="panel"></div>
  <div class="ptab" style="left:68px">문제</div>
  <div class="ptab" style="left:114px">출력</div>
  <div class="ptab" style="left:161px">디버그 콘솔</div>
  <div class="ptab" style="left:242px;color:#424242">터미널</div>
  <div class="a" style="left:240px;top:541px;width:37px;height:1px;background:#424242"></div>
  <svg class="a" style="left:966px;top:522px" width="16" height="16" viewBox="0 0 16 16"><path d="M8 1v14M1 8h14" stroke="#424242" stroke-width="1.1"/></svg>
  <svg class="a" style="left:985px;top:526px" width="10" height="8" viewBox="0 0 10 8"><path d="M1.5 2.5l3.500 3.500 3.500-3.500" stroke="#424242" stroke-width="1" fill="none"/></svg>
  <svg class="a" style="left:1004px;top:522px" width="16" height="16" viewBox="0 0 16 16"><rect x="1.5" y="1.5" width="13" height="13" rx="1.5" fill="none" stroke="#424242" stroke-width="1.1"/><path d="M4.5 4.5l3 3-3 3M8 11h4" stroke="#424242" stroke-width="1.1" fill="none"/></svg>
  <div class="a" style="left:1024px;top:521px;font-size:12px;line-height:18px;color:#424242;letter-spacing:-.4px">pwsh</div>
  <svg class="a" style="left:1057px;top:522px" width="16" height="16" viewBox="0 0 16 16"><rect x="1.5" y="1.5" width="13" height="13" rx="1.5" fill="none" stroke="#424242" stroke-width="1.1"/><path d="M8 1.5v13" stroke="#424242" stroke-width="1.1"/></svg>
  <svg class="a" style="left:1081px;top:522px" width="16" height="16" viewBox="0 0 16 16"><path d="M2 3.5h12M6 3.5V2h4v1.500M3.5 3.5l.8 11h7.400l.8-11" stroke="#424242" stroke-width="1.1" fill="none"/><path d="M6.3 6v6.5M8 6v6.5M9.700 6v6.500" stroke="#424242" stroke-width="1"/></svg>
  <svg class="a" style="left:1105px;top:529px" width="14" height="3"><circle cx="1.5" cy="1.5" r="1.25" fill="#424242"/><circle cx="7" cy="1.5" r="1.25" fill="#424242"/><circle cx="12.5" cy="1.5" r="1.25" fill="#424242"/></svg>
  <div class="a" style="left:1131px;top:522px;width:1px;height:16px;background:#c8c8c8"></div>
  <svg class="a" style="left:1143px;top:522px" width="16" height="16" viewBox="0 0 16 16"><path d="M2 5.5V2h3.5M10.500 2H14v3.500M14 10.500V14h-3.500M5.500 14H2v-3.500" stroke="#424242" stroke-width="1.1" fill="none"/></svg>
  <svg class="a" style="left:1170px;top:522px" width="14" height="16" viewBox="0 0 14 16"><path d="M2 3l10 10M12 3L2 13" stroke="#424242" stroke-width="1.1"/></svg>
  <div class="a" style="left:68px;top:591px;font-family:'Liberation Mono',monospace;font-size:12.5px;letter-spacing:-.5px;font-weight:bold;color:#1f7a9c;line-height:18px;white-space:pre">D:\Projects\windows-fba</div>
  <svg class="a" style="left:54px;top:610px" width="10" height="10" viewBox="0 0 10 10"><circle cx="5" cy="5" r="3.5" fill="none" stroke="#a0a0a0" stroke-width="1"/></svg>
  <svg class="a" style="left:67px;top:609px" width="10" height="13" viewBox="0 0 10 13"><path d="M2.2 2l4.800 4.500-4.800 4.500" stroke="#3a8a00" stroke-width="2.4" fill="none"/></svg>
  <div class="a" style="left:1186px;top:556px;width:1px;height:222px;background:#e0e0e0"></div>
  <div class="a" style="left:1187px;top:662px;width:5px;height:11px;background:#c4c4c4"></div>
  <div class="status"></div>
  <div class="a" style="left:0;top:778px;width:34px;height:22px;background:#16825d"></div>
  <svg class="a" style="left:10px;top:782px" width="14" height="14" viewBox="0 0 14 14"><path d="M2.300 4.300L6.700 8.300 2.300 12.800M11.300 1L7.300 5 11.300 8.500" stroke="#fff" stroke-width="1.1" fill="none"/></svg>
  <svg class="a" style="left:41px;top:782px" width="15" height="15" viewBox="0 0 15 15"><circle cx="7.5" cy="7.5" r="6" fill="none" stroke="#fff" stroke-width="1.1"/><path d="M5 5l5 5M10 5l-5 5" stroke="#fff" stroke-width="1.1"/></svg>
  <div class="stx" style="left:59px">0</div>
  <svg class="a" style="left:69px;top:782px" width="15" height="15" viewBox="0 0 15 15"><path d="M7.5 1.5L1.5 13h12z" fill="none" stroke="#fff" stroke-width="1.1" stroke-linejoin="round"/><path d="M7.5 5.500v4.500M7.500 11v1" stroke="#fff" stroke-width="1.1"/></svg>
  <div class="stx" style="left:86px">0</div>
  <div class="stx" style="left:870px">줄 75, 열 20</div>
  <div class="stx" style="left:948px">공백: 4</div>
  <div class="stx" style="left:1001px">UTF-8</div>
  <div class="stx" style="left:1048px">CRLF</div>
  <div class="stx" style="left:1093px;font-size:12px">{</div>
  <svg class="a" style="left:1097px;top:785px" width="7" height="10" viewBox="0 0 7 10"><circle cx="3.500" cy="6.500" r="2.500" fill="none" stroke="#fff" stroke-width="1"/><path d="M2 5l3 3M5 5L2 8" stroke="#fff" stroke-width=".8"/><path d="M3 0.500v3.300" stroke="#fff" stroke-width="1"/></svg>
  <div class="stx" style="left:1111px">C#</div>
  <svg class="a" style="left:1139px;top:781px" width="17" height="16" viewBox="0 0 20 18"><circle cx="7.3" cy="6.1" r="2.6" fill="none" stroke="#fff" stroke-width="1.6"/><circle cx="14" cy="6.1" r="2.6" fill="none" stroke="#fff" stroke-width="1.6"/><path d="M4.300 8.200C3 8.700 2.400 9.800 2.400 11.200V12.800C2.400 13.800 3 14.600 3.800 15.100 5.600 16.100 8 16.600 10.600 16.600S15.600 16.100 17.400 15.100C18.200 14.600 18.800 13.800 18.800 12.800V11.200C18.800 9.800 18.200 8.700 17 8.200" fill="none" stroke="#fff" stroke-width="1.6"/><path d="M8.800 11v3M12.600 11v3" stroke="#fff" stroke-width="1.4"/><path d="M3 1l14 16" stroke="#007acc" stroke-width="2.6"/><path d="M3 1l14 16" stroke="#fff" stroke-width="1.2"/></svg>
  <svg class="a" style="left:1171px;top:782px" width="14" height="15" viewBox="0 0 14 15"><path d="M7 1.500c-2.500 0-4.300 1.900-4.300 4.300v3.700L1.500 11.500h11L11.300 9.500V5.800C11.300 3.400 9.500 1.500 7 1.500zM5.500 12.500c0 .9.7 1.500 1.500 1.500s1.500-.6 1.500-1.500" fill="none" stroke="#fff" stroke-width="1.1"/></svg>
</div>
<div class="frame"></div>
</body></html>
